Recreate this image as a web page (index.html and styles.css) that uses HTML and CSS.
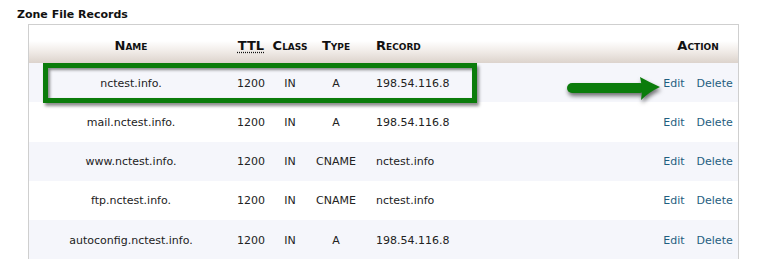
FILE: index.html
```html
<!DOCTYPE html>
<html>
<head>
<meta charset="utf-8">
<link rel="stylesheet" href="styles.css">
</head>
<body>
<h2 class="title">Zone File Records</h2>
<div class="panel">
  <table class="records">
    <colgroup>
      <col class="c-name"><col class="c-ttl"><col class="c-class"><col class="c-type"><col class="c-record"><col class="c-action">
    </colgroup>
    <thead>
      <tr>
        <th>Name</th>
        <th><abbr class="abbr" title="Time To Live">TTL</abbr></th>
        <th>Class</th>
        <th>Type</th>
        <th class="left">Record</th>
        <th>Action</th>
      </tr>
    </thead>
    <tbody>
      <tr class="alt">
        <td>nctest.info.</td><td>1200</td><td>IN</td><td>A</td><td class="left">198.54.116.8</td>
        <td><a class="link" href="#">Edit</a><a class="link gap" href="#">Delete</a></td>
      </tr>
      <tr>
        <td>mail.nctest.info.</td><td>1200</td><td>IN</td><td>A</td><td class="left">198.54.116.8</td>
        <td><a class="link" href="#">Edit</a><a class="link gap" href="#">Delete</a></td>
      </tr>
      <tr class="alt">
        <td>www.nctest.info.</td><td>1200</td><td>IN</td><td>CNAME</td><td class="left">nctest.info</td>
        <td><a class="link" href="#">Edit</a><a class="link gap" href="#">Delete</a></td>
      </tr>
      <tr>
        <td>ftp.nctest.info.</td><td>1200</td><td>IN</td><td>CNAME</td><td class="left">nctest.info</td>
        <td><a class="link" href="#">Edit</a><a class="link gap" href="#">Delete</a></td>
      </tr>
      <tr class="alt">
        <td>autoconfig.nctest.info.</td><td>1200</td><td>IN</td><td>A</td><td class="left">198.54.116.8</td>
        <td><a class="link" href="#">Edit</a><a class="link gap" href="#">Delete</a></td>
      </tr>
    </tbody>
  </table>
  <div class="highlight"></div>
  <svg class="arrow" width="100" height="30" viewBox="0 0 100 30">
    <rect x="2" y="8" width="78" height="10" rx="5" fill="#0b7c0b"/>
    <path d="M75 2 Q84 7 95 12 Q84 17 76 25 Q78 14 75 2 Z" fill="#0b7c0b"/>
  </svg>
</div>
</body>
</html>
```
FILE: styles.css
```css
html, body {
  margin: 0;
  padding: 0;
  background: #fff;
}
body {
  font-family: "DejaVu Sans", Verdana, sans-serif;
  font-size: 11px;
  color: #222;
  overflow: hidden;
}
.title {
  margin: 0;
  padding: 8px 0 0 17px;
  font-size: 11px;
  line-height: 14px;
  font-weight: bold;
  color: #111;
}
.panel {
  position: relative;
  margin: 2px 0 0 28px;
  width: 709px;
  border: 1px solid #cfcfcf;
  border-bottom: none;
}
.records {
  width: 709px;
  border-collapse: collapse;
  table-layout: fixed;
}
.c-name { width: 204px; }
.c-ttl { width: 36px; }
.c-class { width: 42px; }
.c-type { width: 50px; }
.c-record { width: 297px; }
.c-action { width: 80px; }
.records th {
  height: 38px;
  padding: 3px 0 0;
  box-sizing: border-box;
  font-size: 13px;
  font-variant: small-caps;
  font-weight: bold;
  color: #111;
  text-align: center;
  vertical-align: middle;
  background: linear-gradient(to bottom, #ffffff 0%, #ffffff 42%, #f0ebe7 70%, #dcd3cc 100%);
}
.abbr {
  text-decoration: underline dotted;
  text-underline-offset: 2px;
}
.records td {
  height: 39.25px;
  padding: 1px 0 0;
  box-sizing: border-box;
  text-align: center;
  vertical-align: middle;
  white-space: nowrap;
}
.records .left {
  text-align: left;
  padding-left: 15px;
}
.records tr.alt td {
  background: #f5f6fb;
}
.link {
  color: #1f5e80;
  text-decoration: none;
}
.gap {
  margin-left: 12px;
}
.highlight {
  position: absolute;
  left: 14px;
  top: 38px;
  width: 434px;
  height: 40px;
  box-sizing: border-box;
  border: 5px solid #0b7c0b;
  box-shadow: 2px 3px 3px rgba(0, 0, 0, 0.45), inset 2px 2px 3px rgba(0, 0, 0, 0.45);
}
.arrow {
  position: absolute;
  left: 536px;
  top: 50px;
  filter: drop-shadow(1px 3px 2px rgba(0, 0, 0, 0.55));
}
```
